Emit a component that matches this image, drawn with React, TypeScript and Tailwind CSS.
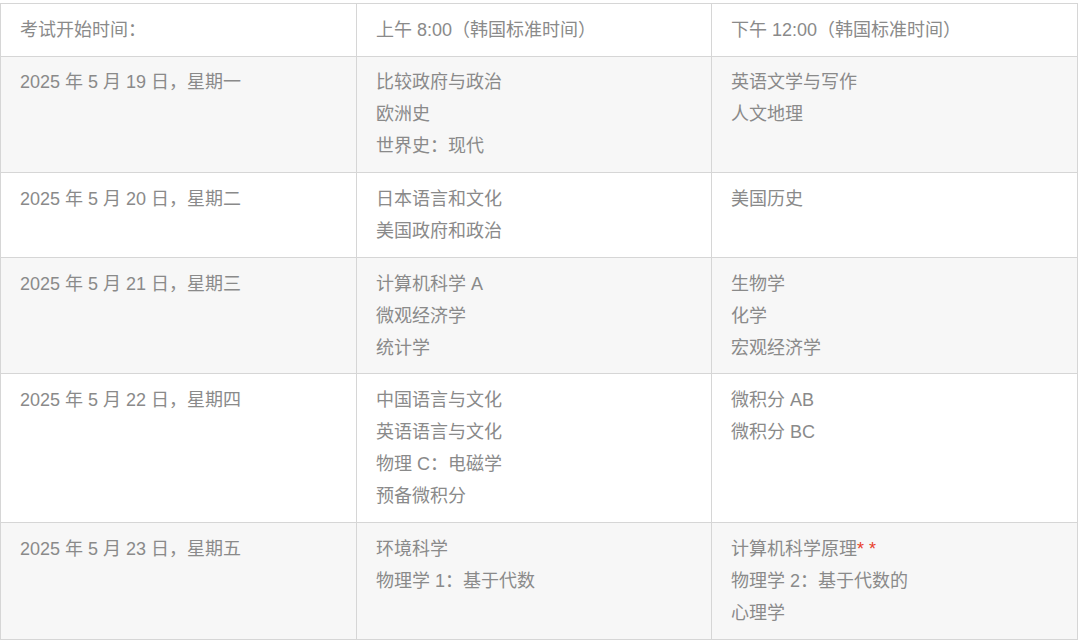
const rows: { date: string; am: string[]; pm: string[] }[] = [
  {
    date: '2025 年 5 月 19 日，星期一',
    am: ['比较政府与政治', '欧洲史', '世界史：现代'],
    pm: ['英语文学与写作', '人文地理'],
  },
  {
    date: '2025 年 5 月 20 日，星期二',
    am: ['日本语言和文化', '美国政府和政治'],
    pm: ['美国历史'],
  },
  {
    date: '2025 年 5 月 21 日，星期三',
    am: ['计算机科学 A', '微观经济学', '统计学'],
    pm: ['生物学', '化学', '宏观经济学'],
  },
  {
    date: '2025 年 5 月 22 日，星期四',
    am: ['中国语言与文化', '英语语言与文化', '物理 C：电磁学', '预备微积分'],
    pm: ['微积分 AB', '微积分 BC'],
  },
  {
    date: '2025 年 5 月 23 日，星期五',
    am: ['环境科学', '物理学 1：基于代数'],
    pm: ['计算机科学原理', '物理学 2：基于代数的', '心理学'],
  },
];

function Cell({ lines, star }: { lines: string[]; star?: boolean }) {
  return (
    <td className="border-[1.5px] border-[#d6d6d6] px-[19px] py-[9.8px] align-top">
      {lines.map((l, i) => (
        <div key={i} className="leading-8">
          {l}
          {star && i === 0 && <span className="text-[#e8412c]">* *</span>}
        </div>
      ))}
    </td>
  );
}

export default function App() {
  return (
    <div className="bg-white pt-[3px]">
      <table
        className="w-[1078px] table-fixed border-collapse text-[18px] text-[#8a8a8a]"
        style={{ fontFamily: '"Liberation Sans", "Noto Sans CJK SC", sans-serif' }}
      >
        <colgroup>
          <col className="w-[356px]" />
          <col className="w-[355px]" />
          <col />
        </colgroup>
        <thead>
          <tr className="bg-white text-left">
            <th className="border-[1.5px] border-[#d6d6d6] px-[19px] py-[9.8px] font-normal leading-8">考试开始时间：</th>
            <th className="border-[1.5px] border-[#d6d6d6] px-[19px] py-[9.8px] font-normal leading-8">上午 8:00（韩国标准时间）</th>
            <th className="border-[1.5px] border-[#d6d6d6] px-[19px] py-[9.8px] font-normal leading-8">下午 12:00（韩国标准时间）</th>
          </tr>
        </thead>
        <tbody>
          {rows.map((r, i) => (
            <tr key={i} className={i % 2 === 0 ? 'bg-[#f7f7f7]' : 'bg-white'}>
              <Cell lines={[r.date]} />
              <Cell lines={r.am} />
              <Cell lines={r.pm} star={i === 4} />
            </tr>
          ))}
        </tbody>
      </table>
    </div>
  );
}
